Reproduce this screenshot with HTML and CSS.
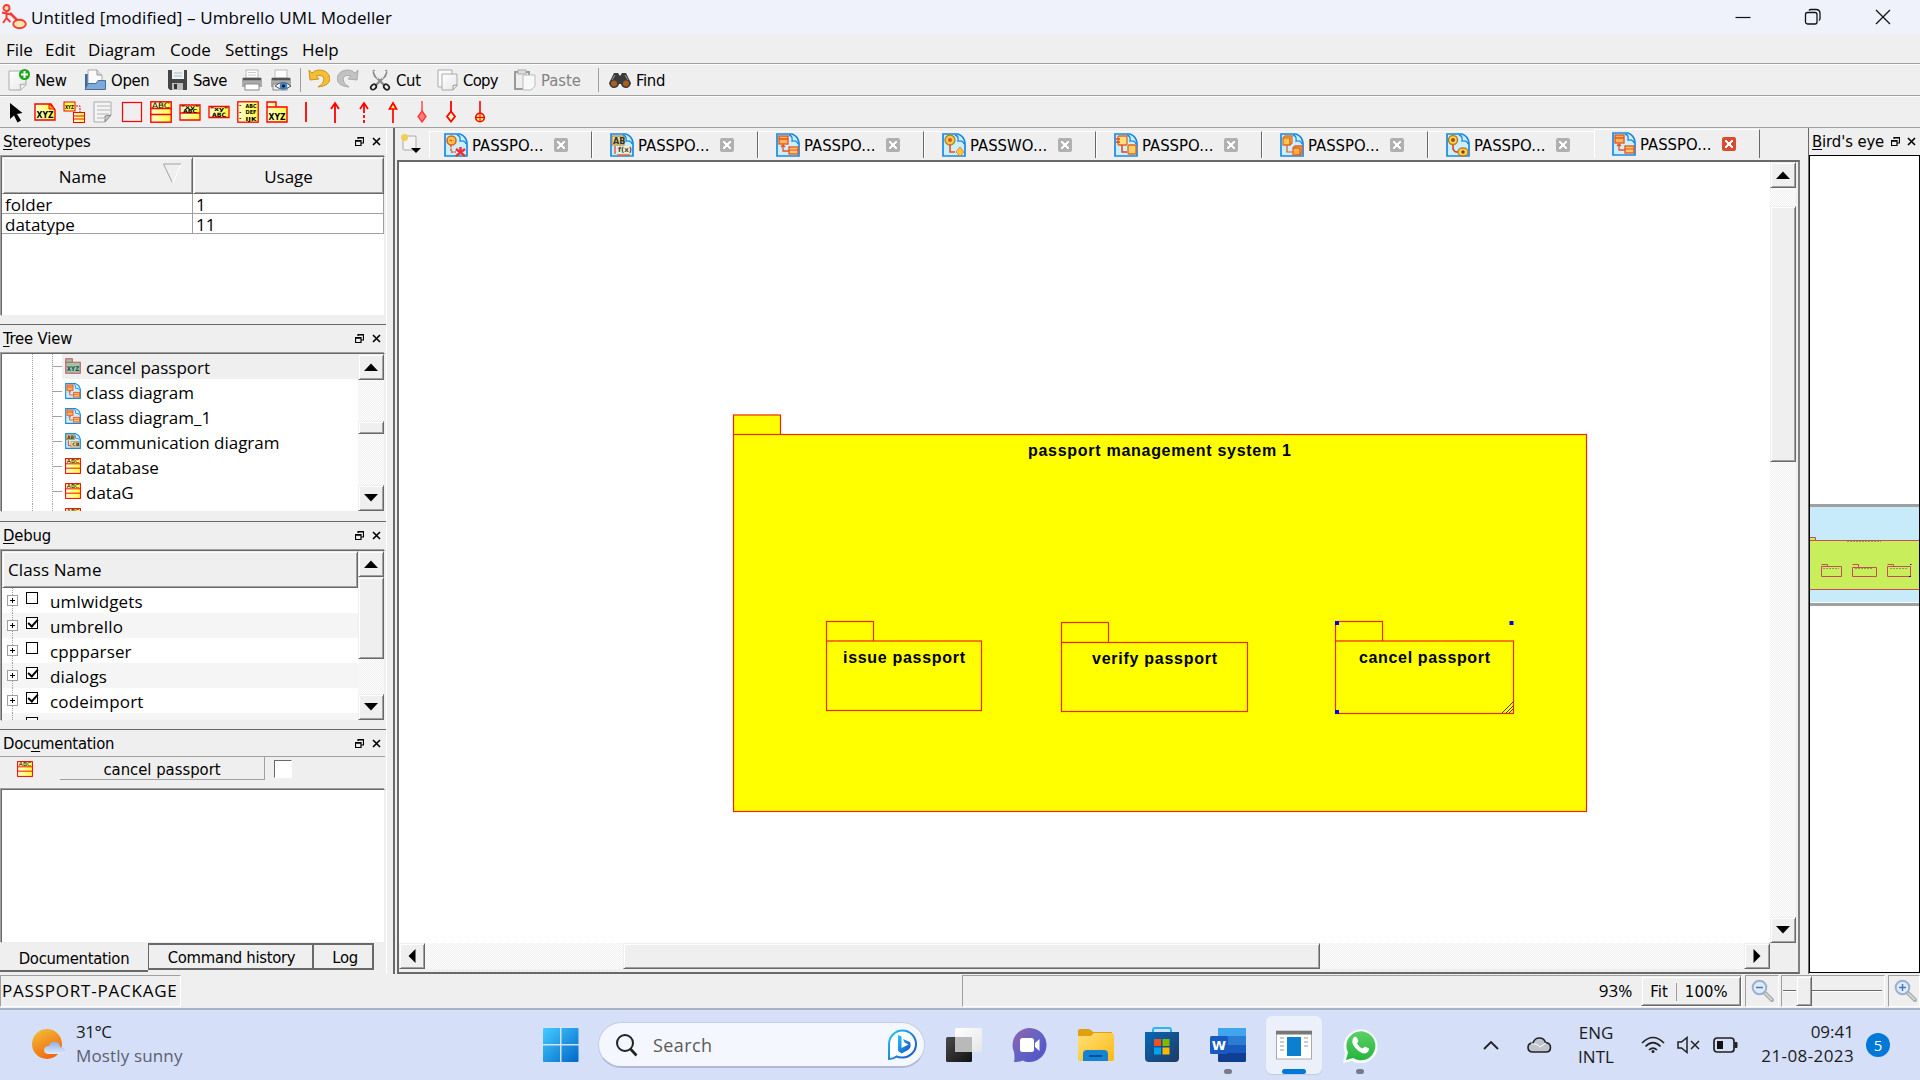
FILE: index.html
```html
<!DOCTYPE html>
<html lang="en">
<head>
<meta charset="utf-8">
<title>Umbrello UML Modeller</title>
<link rel="stylesheet" href="styles.css">
</head>
<body>
<svg class="defs" width="0" height="0" aria-hidden="true">
  <defs>
    <linearGradient id="gy" x1="0" y1="0" x2="1" y2="0"><stop offset="0" stop-color="#ffffd0"/><stop offset="1" stop-color="#ffff3c"/></linearGradient>
    <linearGradient id="gsun" x1="0" y1="0" x2=".5" y2="1"><stop offset="0" stop-color="#f3c23a"/><stop offset="1" stop-color="#ef6a10"/></linearGradient>
    <linearGradient id="gcloud" x1="0" y1="0" x2="0" y2="1"><stop offset="0" stop-color="#8fb0ea"/><stop offset="1" stop-color="#dfeafc"/></linearGradient>
    <linearGradient id="gwin" x1="0" y1="0" x2="1" y2="1"><stop offset="0" stop-color="#45ccff"/><stop offset="1" stop-color="#0067c9"/></linearGradient>
    <linearGradient id="gbing" x1="0" y1="0" x2="1" y2="1"><stop offset="0" stop-color="#21c8f6"/><stop offset="1" stop-color="#1b49c4"/></linearGradient>
    <linearGradient id="gchat" x1="0" y1="0" x2="1" y2="1"><stop offset="0" stop-color="#9563a8"/><stop offset=".5" stop-color="#6264c4"/><stop offset="1" stop-color="#4d50c8"/></linearGradient>
    <linearGradient id="gfold" x1="0" y1="0" x2="1" y2="1"><stop offset="0" stop-color="#ffe07a"/><stop offset="1" stop-color="#fdb913"/></linearGradient>
    <linearGradient id="gstore" x1="0" y1="0" x2="1" y2="1"><stop offset="0" stop-color="#0568b8"/><stop offset="1" stop-color="#203a63"/></linearGradient>
    <linearGradient id="gwa" x1="0" y1="0" x2="0" y2="1"><stop offset="0" stop-color="#5bd066"/><stop offset="1" stop-color="#27b43e"/></linearGradient>
    <linearGradient id="gdark" x1="0" y1="0" x2="1" y2="1"><stop offset="0" stop-color="#4a4a4a"/><stop offset="1" stop-color="#111"/></linearGradient>
    <linearGradient id="gpage" x1="0" y1="0" x2="1" y2="1"><stop offset="0" stop-color="#fff"/><stop offset="1" stop-color="#e6e6e6"/></linearGradient>

    <symbol id="float" viewBox="0 0 9 9"><path d="M3 .5h5.500v5.500h-2M3 0v2M8.500 1h-5.500M.5 3.500h5.500v5h-5.500zM.5 4.200h5.500" fill="none" stroke="#000" stroke-width="1.200"/></symbol>
    <symbol id="close" viewBox="0 0 9 9"><path d="M1 1l7 7M8 1l-7 7" stroke="#000" stroke-width="1.600"/></symbol>
    <symbol id="up" viewBox="0 0 14 8"><path d="M0 8L7 0.500 14 8z"/></symbol>
    <symbol id="down" viewBox="0 0 14 8"><path d="M0 0L7 7.500 14 0z"/></symbol>

    <symbol id="page" viewBox="0 0 24 24"><path d="M1 1h15q6 2 7 9v13h-22z" fill="#ccefff" stroke="#1a8ae0" stroke-width="1.700"/><path d="M13 2q4 1 3 6 5-1 6 3" fill="#fff" stroke="#1a8ae0" stroke-width="1.300"/></symbol>
    <symbol id="d-use" viewBox="0 0 24 24"><use href="#page"/><circle cx="7.500" cy="7.500" r="4.500" fill="#f6c94a" stroke="#d9641e" stroke-width="1.600"/><path d="M5.500 7.500h4M7 12v7h5" fill="none" stroke="#f04c30" stroke-width="1.500" stroke-dasharray="2.500 1"/><path d="M12 16l9 7M21 16l-9 7M16.500 14v5" stroke="#f03030" stroke-width="2.400"/></symbol>
    <symbol id="d-seq" viewBox="0 0 24 24"><use href="#page"/><rect x="2" y="3" width="12" height="9" fill="#f0dc8c" stroke="#a88232"/><text x="3" y="11" font-size="8" font-weight="700" fill="#333">AB</text><path d="M5 13v8M7 22h13" stroke="#f06030" stroke-width="1.500"/><rect x="8" y="13" width="13" height="7" fill="#f3ecc8"/><text x="8" y="19" font-size="7" font-weight="700" fill="#444">f(x)</text></symbol>
    <symbol id="d-class" viewBox="0 0 24 24"><use href="#page"/><rect x="3" y="3" width="9" height="8" fill="#ffb55c" stroke="#e8501c" stroke-width="1.300"/><path d="M3 6h9M7 12v6h6M5 14l2-2 2 2" fill="none" stroke="#e8501c" stroke-width="1.300"/><rect x="13" y="14" width="9" height="7" fill="#ffc66c" stroke="#e8501c" stroke-width="1.300"/><path d="M13 17h9" stroke="#e8501c"/></symbol>
    <symbol id="d-act" viewBox="0 0 24 24"><use href="#page"/><circle cx="8" cy="7" r="5" fill="#f6c94a" stroke="#a88232" stroke-width="1.300"/><circle cx="8" cy="7" r="2" fill="#d9541e"/><path d="M8 12v7h5" fill="none" stroke="#f04c20" stroke-width="1.600"/><path d="M18 14l4 5-4 4-4-4z" fill="#ffc83c" stroke="#f08020"/></symbol>
    <symbol id="d-comp" viewBox="0 0 24 24"><use href="#page"/><rect x="4" y="3" width="9" height="9" rx="1" fill="#ffe07c" stroke="#e8601c" stroke-width="1.300"/><path d="M2 6h4M2 9h4M8 12v7h5" fill="none" stroke="#e8401c" stroke-width="1.500"/><rect x="14" y="12" width="8" height="9" rx="1" fill="#ffd25c" stroke="#e8601c" stroke-width="1.300"/></symbol>
    <symbol id="d-dep" viewBox="0 0 24 24"><use href="#page"/><path d="M3 5l2-2h7v7l-2 2h-7z" fill="#ffc64c" stroke="#d9701e" stroke-width="1.300"/><path d="M3 5h7v7M7 12v7h6" fill="none" stroke="#e0502c" stroke-width="1.200"/><path d="M13 15l2-2h7v7l-2 2h-7z" fill="#ffb03c" stroke="#e0602c" stroke-width="1.300"/><path d="M13 15h7v7" fill="none" stroke="#c0502c"/></symbol>
    <symbol id="d-state" viewBox="0 0 24 24"><use href="#page"/><circle cx="7" cy="7" r="4.500" fill="#f6d94a" stroke="#c07a22" stroke-width="1.500"/><circle cx="7" cy="7" r="2" fill="#a05020"/><path d="M7 12q-1 8 6 7" fill="none" stroke="#e0401c" stroke-width="1.600"/><ellipse cx="17" cy="19" rx="5" ry="4" fill="#f6d94a" stroke="#c07a22" stroke-width="1.400"/><circle cx="17" cy="19" r="1.800" fill="#a03020"/></symbol>
    <symbol id="d-comm" viewBox="0 0 24 24"><use href="#page"/><rect x="2" y="3" width="12" height="7" fill="#f0e08c" stroke="#a88232"/><text x="3" y="9" font-size="7" font-weight="700" fill="#333">AB</text><path d="M5 11v8h4" fill="none" stroke="#e0401c" stroke-width="1.500"/><rect x="9" y="13" width="12" height="8" fill="#f8e89c" stroke="#c88232"/><text x="11" y="20" font-size="7" font-weight="700" fill="#333">CB</text></symbol>
    <symbol id="cls" viewBox="0 0 22 22"><rect x=".8" y=".8" width="20.400" height="20.400" fill="url(#gy)" stroke="red" stroke-width="1.400"/><path d="M1 8h20M1 14h20" stroke="red" stroke-width="1.300"/><text x="11" y="7.300" font-size="7.500" text-anchor="middle" textLength="17" lengthAdjust="spacingAndGlyphs">ABC</text></symbol>
    <symbol id="pkg" viewBox="0 0 22 22"><path d="M1 21V1h9v5h11v15zM1 6h9" fill="url(#gy)" stroke="red" stroke-width="1.400"/><text x="11" y="18.500" font-size="9" font-weight="700" text-anchor="middle" textLength="17" lengthAdjust="spacingAndGlyphs">XYZ</text></symbol>
    <symbol id="pkg-sel" viewBox="0 0 22 22"><path d="M1 21V1h9v5h11v15zM1 6h9" fill="#9fc79a" stroke="#c0506a" stroke-width="1.400"/><text x="11" y="18.500" font-size="9" font-weight="700" fill="#1c4a6c" text-anchor="middle" textLength="17" lengthAdjust="spacingAndGlyphs">XYZ</text></symbol>
    <symbol id="mag" viewBox="0 0 24 24"><path d="M13 13l8 8" stroke="#aaa" stroke-width="4" stroke-linecap="round"/><path d="M14 14l7 7" stroke="#ddd" stroke-width="1.500"/><circle cx="8.500" cy="8.500" r="6.800" fill="#dcebfa" stroke="#9ab0cc" stroke-width="2"/></symbol>
  </defs>
</svg>

<header class="titlebar">
  <svg class="app-logo" width="26" height="26" viewBox="0 0 26 26"><g fill="#ffe9b0" stroke="#fb3a30" stroke-width="1.900"><path d="M9 9l9 9" stroke-width="2.500"/><circle cx="5.500" cy="4" r="3"/><path d="M1 8.500l9 2M5.500 7v7l-3.500 5M5.500 14l4 4" fill="none"/><ellipse cx="18.500" cy="20" rx="6.300" ry="4.300"/></g></svg>
  <span class="title-text">Untitled [modified] – Umbrello UML Modeller</span>
  <div class="caption-buttons">
    <svg width="18" height="18"><path d="M1.500 9.500h15" stroke="#111" stroke-width="1.200"/></svg>
    <svg width="18" height="18" fill="none" stroke="#111" stroke-width="1.300"><rect x="1.500" y="4.500" width="11.500" height="11.500" rx="2"/><path d="M5 2.500q.5-1 2-1h5q4 0 4 4v5q0 1.500-1.200 2"/></svg>
    <svg width="18" height="18"><path d="M2 2l14 14M16 2L2 16" stroke="#111" stroke-width="1.300"/></svg>
  </div>
</header>

<nav class="menubar"><span>File</span><span>Edit</span><span>Diagram</span><span>Code</span><span>Settings</span><span>Help</span></nav>

<div class="toolbar main-tools">
  <span class="tool"><svg width="22" height="22"><path d="M1 2h17v14l-5 5H1z" fill="url(#gpage)" stroke="#aaa"/><path d="M18 15l-6 .5 1 5.500" fill="#eee" stroke="#aaa"/><circle cx="16.500" cy="5.500" r="5.500" fill="#18a818"/><path d="M16.500 2v7M13 5.500h7" stroke="#fff" stroke-width="2"/></svg><b>New</b></span>
  <span class="tool"><svg width="22" height="22"><path d="M1 5h5V20H1z" fill="#3d6a9e"/><path d="M4 1h9l5 5v9H4z" fill="#fafafa" stroke="#aaa"/><path d="M13 1v5h5" fill="#ddd" stroke="#999"/><path d="M1 20.500l3-6h8l2-3h7.500v9z" fill="#7fa9d8" stroke="#44719f"/></svg><b>Open</b></span>
  <span class="tool save"><svg width="22" height="22"><path d="M1 1h19v20H3l-2-2z" fill="#454545"/><rect x="5" y="1" width="12" height="9" fill="#eef3f8"/><path d="M7 4h8M7 7h8" stroke="#a9b6c6"/><rect x="5" y="14" width="11" height="7" fill="#bbb"/><rect x="7" y="15" width="3" height="5" fill="#333"/></svg><b>Save</b></span>
  <span class="tool"><svg width="22" height="22"><rect x="5" y="1" width="12" height="8" fill="#fff" stroke="#bbb"/><path d="M7 3.500h8M7 6h8" stroke="#ccc"/><path d="M1 9h20v9H1z" fill="#aaa"/><path d="M2 10h18" stroke="#555" stroke-width="2.500"/><rect x="4" y="15" width="14" height="6" fill="#fff" stroke="#888"/></svg></span>
  <span class="tool"><svg width="22" height="22"><rect x="5" y="1" width="12" height="8" fill="#fff" stroke="#bbb"/><path d="M1 9h20v9H1z" fill="#aaa"/><path d="M2 10h18" stroke="#555" stroke-width="2.500"/><rect x="3" y="15" width="14" height="6" fill="#eee" stroke="#888"/><path d="M5 17q8-7 16 0-8 6-16 0z" fill="#fff" stroke="#456"/><circle cx="13.500" cy="17" r="3.800" fill="#3f7fc4"/><circle cx="13.500" cy="17" r="1.500" fill="#112"/></svg></span>
  <i class="tool-sep"></i>
  <span class="tool"><svg width="22" height="22"><path d="M1 1l1 10 9-1-3-3q7-2 8 3 0 5-6 8 12-1 12-9Q20 1 11 1 7 1 4 4z" fill="#f3bd36" stroke="#cf9417"/></svg></span>
  <span class="tool"><svg width="22" height="22"><path d="M21 1l-1 10-9-1 3-3q-7-2-8 3 0 5 6 8Q0 17 0 9 2 1 11 1q4 0 7 3z" fill="#c2c2c2" stroke="#aaa"/></svg></span>
  <span class="tool"><svg width="22" height="22"><path d="M5 1q-1 3 1 6l9 9M17 1q1 3-1 6l-9 9" fill="none" stroke="#8b8b8b" stroke-width="2.300"/><path d="M5 2l4 8M17 2l-4 8" stroke="#f8f8f8"/><ellipse cx="4.500" cy="18" rx="3" ry="2.300" transform="rotate(-45 4.500 18)" fill="none" stroke="#222" stroke-width="1.800"/><ellipse cx="17.500" cy="18" rx="3" ry="2.300" transform="rotate(45 17.500 18)" fill="none" stroke="#222" stroke-width="1.800"/></svg><b>Cut</b></span>
  <span class="tool save"><svg width="22" height="22"><path d="M1 1h14v17H1z" fill="#fafafa" stroke="#aaa"/><path d="M5 5h15v12l-4 4H5z" fill="url(#gpage)" stroke="#aaa"/><path d="M20 16l-4 .5v4.500" fill="none" stroke="#999"/></svg><b>Copy</b></span>
  <span class="tool off"><svg width="22" height="22"><rect x="1" y="3" width="14" height="17" fill="#eee" stroke="#999" stroke-width="2"/><rect x="4" y="1" width="8" height="4" fill="#ddd" stroke="#aaa"/><path d="M9 6h12v11l-4 4H9z" fill="#f8f8f8" stroke="#bbb"/></svg><b>Paste</b></span>
  <i class="tool-sep"></i>
  <span class="tool"><svg width="22" height="22"><path d="M5 4h4l2 3 2-3h4l5 10q-1 5-5 5-4 0-5-4h-2q-1 4-5 4-4 0-5-5z" fill="#3a3a3a"/><circle cx="5" cy="14.500" r="3" fill="#a85e22"/><circle cx="17" cy="14.500" r="3" fill="#a85e22"/><path d="M6 6l-3 5M16 6l3 5" stroke="#999"/></svg><b>Find</b></span>
</div>

<div class="toolbar uml-tools">
  <svg width="22" height="22"><path d="M5 2v16l4-3.500 3.500 7 3.500-2-4-6.500 5.500-1z" fill="#000"/></svg>
  <svg width="22" height="22"><path d="M1 19V3h16l4 6v10z" fill="url(#gy)" stroke="red" stroke-width="1.400"/><path d="M15 3v5h6z" fill="#f6b800" stroke="red"/><text x="11" y="17" font-size="9" font-weight="700" text-anchor="middle" textLength="17" lengthAdjust="spacingAndGlyphs">XYZ</text></svg>
  <svg width="22" height="22"><rect x="1" y="1" width="11" height="9" fill="#ffff50" stroke="red"/><text x="2" y="8" font-size="5.500" font-weight="700" textLength="9" lengthAdjust="spacingAndGlyphs">XYZ</text><path d="M13 5h4v6" stroke="red" fill="none" stroke-dasharray="2 1"/><rect x="10.500" y="11.500" width="11" height="10" fill="url(#gy)" stroke="red"/><path d="M10 15h12M10 18h12" stroke="red"/></svg>
  <svg width="22" height="22"><path d="M2 1h17v13l-6 7H2z" fill="#f4f4f4" stroke="#aaa"/><path d="M5 5h13M5 9h13M5 13h12M5 17h7" stroke="#b4b4b4"/><path d="M19 14l-6 1v6z" fill="#ccc" stroke="#888"/></svg>
  <svg width="22" height="22"><rect x="1.500" y="1.500" width="19" height="19" fill="none" stroke="red" stroke-width="1.200"/></svg>
  <svg width="22" height="22"><rect x=".8" y=".8" width="20.400" height="20.400" fill="url(#gy)" stroke="red" stroke-width="1.400"/><path d="M1 7.500h20M1 13.500h20" stroke="red" stroke-width="1.300"/><text x="11" y="7" font-size="7.500" text-anchor="middle" textLength="18" lengthAdjust="spacingAndGlyphs">ABC</text></svg>
  <svg width="22" height="22"><path d="M1 4h20v15H1zM1 12h20" fill="url(#gy)" stroke="red" stroke-width="1.300"/><text x="11" y="7.500" font-size="5" font-weight="700" text-anchor="middle" textLength="18" lengthAdjust="spacingAndGlyphs">"xy"</text><text x="11" y="11.500" font-size="5.500" font-weight="700" text-anchor="middle" textLength="14" lengthAdjust="spacingAndGlyphs">ABC</text></svg>
  <svg width="22" height="22"><path d="M1 5.500h20v11H1z" fill="url(#gy)" stroke="red" stroke-width="1.300"/><text x="11" y="9.800" font-size="5.500" font-weight="700" text-anchor="middle" textLength="18" lengthAdjust="spacingAndGlyphs">"xy"</text><text x="11" y="15.500" font-size="6" font-weight="700" text-anchor="middle" textLength="14" lengthAdjust="spacingAndGlyphs">ABC</text></svg>
  <svg width="22" height="22"><rect x=".8" y=".8" width="20.400" height="20.400" fill="url(#gy)" stroke="red" stroke-width="1.300"/><g font-size="5.500" font-weight="700"><text x="2" y="6">-</text><text x="8.500" y="6.500" textLength="11" lengthAdjust="spacingAndGlyphs">ABC</text><text x="2" y="13">-</text><text x="8.500" y="13" textLength="11" lengthAdjust="spacingAndGlyphs">DEF</text><text x="2" y="19">-</text><text x="8.500" y="19.500" textLength="11" lengthAdjust="spacingAndGlyphs">IJK</text></g></svg>
  <svg width="22" height="22"><use href="#pkg"/></svg>
  <svg width="22" height="22"><path d="M11 1v20" stroke="red" stroke-width="1.800"/></svg>
  <svg width="22" height="22" fill="none" stroke="red" stroke-width="1.800"><path d="M11 22V2M7 8l4-6 4 6"/></svg>
  <svg width="22" height="22" fill="none" stroke="red" stroke-width="1.800"><path d="M11 22V9" stroke-dasharray="3 2"/><path d="M11 9V2M7 8l4-6 4 6"/></svg>
  <svg width="22" height="22" stroke="red" stroke-width="1.700"><path d="M11 22V8"/><path d="M7.500 8L11 2l3.500 6z" fill="#ffff50"/></svg>
  <svg width="22" height="22" stroke="#f33" stroke-width="1.300"><path d="M11 0v11"/><path d="M11 10l4 5.500-4 5.500-4-5.500z" fill="#ff7d7d"/></svg>
  <svg width="22" height="22" stroke="red" stroke-width="1.800"><path d="M11 0v11"/><path d="M11 10.500l4 5-4 5-4-5z" fill="#ffffc0"/></svg>
  <svg width="22" height="22" stroke="red" stroke-width="1.600"><path d="M11 0v12"/><circle cx="11" cy="16.500" r="4.300" fill="#ffe860"/><path d="M11 12v9M7 16.500h8" stroke-width="1"/></svg>
</div>

<main class="workspace">
  <aside class="left-dock">
    <section class="dock stereo">
      <h2 class="dock-title"><span><u>S</u>tereotypes</span><svg><use href="#float"/></svg><svg><use href="#close"/></svg></h2>
      <div class="sunken">
        <div class="grid-head"><span class="raised name-head">Name<svg width="20" height="22"><path d="M.5 1h18M.5 1l9 19" stroke="#a0a0a0" fill="none"/><path d="M18.500 1l-9 19" stroke="#fff"/></svg></span><span class="raised">Usage</span></div>
        <div class="grid-row"><span>folder</span><span>1</span></div>
        <div class="grid-row"><span>datatype</span><span>11</span></div>
      </div>
    </section>
    <section class="dock tree">
      <h2 class="dock-title"><span><u>T</u>ree View</span><svg><use href="#float"/></svg><svg><use href="#close"/></svg></h2>
      <div class="sunken scroll-box">
        <ul class="tree-list">
          <li><div class="hl"><svg><use href="#pkg-sel"/></svg>cancel passport</div></li>
          <li><div><svg><use href="#d-class"/></svg>class diagram</div></li>
          <li><div><svg><use href="#d-class"/></svg>class diagram_1</div></li>
          <li><div><svg><use href="#d-comm"/></svg>communication diagram</div></li>
          <li><div><svg><use href="#cls"/></svg>database</div></li>
          <li><div><svg><use href="#cls"/></svg>dataG</div></li>
          <li><div><svg><use href="#cls"/></svg></div></li>
        </ul>
        <div class="vscroll"><i class="raised btn"><svg><use href="#up"/></svg></i><i class="gap-t"></i><i class="raised thumb-t"></i><i class="fill"></i><i class="raised btn"><svg><use href="#down"/></svg></i></div>
      </div>
    </section>
    <section class="dock debug">
      <h2 class="dock-title"><span><u>D</u>ebug</span><svg><use href="#float"/></svg><svg><use href="#close"/></svg></h2>
      <div class="sunken scroll-box">
        <div class="debug-list">
          <div class="raised class-head">Class Name</div>
          <div class="check-row"><i class="plus"></i><i class="box"></i>umlwidgets</div>
          <div class="check-row"><i class="plus"></i><i class="box on"></i>umbrello</div>
          <div class="check-row"><i class="plus"></i><i class="box"></i>cppparser</div>
          <div class="check-row"><i class="plus"></i><i class="box on"></i>dialogs</div>
          <div class="check-row"><i class="plus"></i><i class="box on"></i>codeimport</div>
          <div class="check-row"><i class="plus"></i><i class="box"></i></div>
        </div>
        <div class="vscroll"><i class="raised btn"><svg><use href="#up"/></svg></i><i class="raised thumb-d"></i><i class="fill"></i><i class="raised btn"><svg><use href="#down"/></svg></i></div>
      </div>
    </section>
    <section class="dock docs">
      <h2 class="dock-title"><span>Doc<u>u</u>mentation</span><svg><use href="#float"/></svg><svg><use href="#close"/></svg></h2>
      <div class="doc-bar"><svg width="16" height="16"><use href="#cls"/></svg><span class="doc-name">cancel passport</span><i class="doc-check"></i></div>
      <div class="sunken doc-text"></div>
      <div class="dock-tabs"><span class="cur">Documentation</span><span class="hist">Command history</span><span class="log">Log</span></div>
    </section>
  </aside>

  <section class="center">
    <div class="tabs">
      <span class="new-tab"><svg width="22" height="22"><rect x="3" y="3" width="13" height="14" rx="1" fill="#f4f4f4" stroke="#aaa"/><circle cx="4.500" cy="4.500" r="3.500" fill="#f0cf58"/><path d="M11 15h10l-5 5z"/></svg></span>
      <span class="tab first"><svg><use href="#d-use"/></svg><b>PASSPO...</b><i class="x"></i></span>
      <span class="tab"><svg><use href="#d-seq"/></svg><b>PASSPO...</b><i class="x"></i></span>
      <span class="tab"><svg><use href="#d-class"/></svg><b>PASSPO...</b><i class="x"></i></span>
      <span class="tab big"><svg><use href="#d-act"/></svg><b>PASSWO...</b><i class="x"></i></span>
      <span class="tab"><svg><use href="#d-comp"/></svg><b>PASSPO...</b><i class="x"></i></span>
      <span class="tab"><svg><use href="#d-dep"/></svg><b>PASSPO...</b><i class="x"></i></span>
      <span class="tab last"><svg><use href="#d-state"/></svg><b>PASSPO...</b><i class="x"></i></span>
      <span class="tab active"><svg><use href="#d-class"/></svg><b>PASSPO...</b><i class="x"></i></span>
    </div>
    <div class="canvas-frame">
      <svg class="canvas" width="1371" height="781" viewBox="399 162 1371 781">
        <g fill="#ff0" stroke="#f02800" stroke-width="1.200">
          <rect x="733.500" y="415" width="47" height="20"/><rect x="733.500" y="434.500" width="853" height="377"/>
          <rect x="826.500" y="621.500" width="47" height="20"/><rect x="826.500" y="641" width="155" height="69.500"/>
          <rect x="1061.500" y="622.500" width="47" height="20"/><rect x="1061.500" y="642.500" width="186" height="69"/>
          <rect x="1335.500" y="621.500" width="47" height="20"/><rect x="1335.500" y="641" width="178" height="72.500"/>
        </g>
        <g class="node-label"><text x="1028" y="456" textLength="263">passport management system 1</text><text x="843" y="663" textLength="122">issue passport</text><text x="1092" y="664" textLength="125">verify passport</text><text x="1359" y="663" textLength="131">cancel passport</text></g>
        <path d="M1502 713l11.500-11.500M1506 713l7.500-7.500M1509 713l4.500-4.500" stroke="#553c00"/>
        <path d="M1335 621h4v4h-4zM1509.500 621h4v4h-4zM1335 710h4v4h-4z" fill="#00f"/>
      </svg>
      <div class="vscroll"><i class="raised btn"><svg><use href="#up"/></svg></i><i class="gap-m"></i><i class="raised thumb-m"></i><i class="fill"></i><i class="raised btn"><svg><use href="#down"/></svg></i></div>
      <div class="hscroll"><i class="raised hbtn"><svg width="8" height="14"><path d="M7.500 0L.5 7l7 7z"/></svg></i><i class="gap-h"></i><i class="raised thumb-h"></i><i class="fill"></i><i class="raised hbtn"><svg width="8" height="14"><path d="M.5 0l7 7-7 7z"/></svg></i></div>
    </div>
  </section>

  <aside class="right-dock">
    <h2 class="dock-title"><span><u>B</u>ird's eye</span><svg><use href="#float"/></svg><svg><use href="#close"/></svg></h2>
    <div class="overview">
      <svg width="111" height="103" viewBox="0 0 111 103"><rect width="111" height="103" fill="#fff"/><rect y="1" width="111" height="3" fill="#a0a0a0"/><rect y="4" width="111" height="95" fill="#c8ebfa"/><rect y="100" width="111" height="3" fill="#a0a0a0"/><rect x="-2" y="37.500" width="115" height="49" fill="#c9ee5c" stroke="#c84a5c"/><path d="M0 34.500h6.500v3H0z" fill="#c9ee5c" stroke="#c84a5c"/><g fill="none" stroke="#c84a5c"><path d="M12.500 63.500h20v10h-20zM12.500 61.500h6v2M43.500 64.500h24v9h-24zM43.500 61.500h6v3M78.500 63.500h23v10h-23zM78.500 61.500h6v2"/><path d="M38 38.500h34M14 65.500h16M46 65.500h17M81 65.500h17" stroke="#86a24c" stroke-dasharray="2 1"/></g><path d="M101 61h1.500v1H101zM100 73h2v1h-2z" fill="#00f"/><path d="M.5 4v95M110.500 4v95" stroke="#285060"/></svg>
    </div>
  </aside>
</main>

<footer class="statusbar">
  <span class="st-name">PASSPORT-PACKAGE</span>
  <span class="st-zoom">93%<span class="raised st-buttons"><b>Fit</b><i></i><b>100%</b></span></span>
  <span class="st-cell zo"><svg width="24" height="24"><use href="#mag"/><path d="M5 8.500h7" stroke="#4878b8" stroke-width="1.500"/></svg></span>
  <span class="st-cell slider"><i class="rail a"></i><i class="raised knob"></i><i class="rail b"></i></span>
  <span class="st-cell zi"><svg width="24" height="24"><use href="#mag"/><path d="M5 8.500h7M8.500 5v7" stroke="#4878b8" stroke-width="1.500"/></svg></span>
</footer>

<div class="taskbar">
  <div class="weather">
    <svg width="34" height="32"><circle cx="15" cy="15" r="15" fill="url(#gsun)"/><path d="M17 25q-5 0-5-4t5-4q2-5 7-4 4 1 4 5 5 0 5 3.500t-4 3.500z" fill="url(#gcloud)"/></svg>
    <div class="wtext"><span class="deg">31°C</span><span class="muted">Mostly sunny</span></div>
  </div>
  <div class="apps">
    <svg class="start" width="36" height="36"><path d="M0 2q0-1 1-1h16v16H0zM18.500 1h16q1 0 1 1v15h-17zM0 18.500h17V35H1q-1 0-1-1zM18.500 18.500h17V34q0 1-1 1h-16z" fill="url(#gwin)"/></svg>
    <div class="search">
      <svg width="24" height="24" fill="none" stroke="#222"><circle cx="11" cy="10" r="8" stroke-width="2"/><path d="M16.500 16l6 6.500" stroke-width="2.600"/></svg><span>Search</span>
      <svg class="bing" width="31" height="32"><path d="M2 30q0-3 0-15A13.500 13.500 0 1 1 15.500 28.500q-4 0-6-1-3 2.500-7.500 2.500z" fill="#fff" stroke="url(#gbing)" stroke-width="2"/><path d="M11 6l3.500 1.500V19l7-3.500-4-2-1.500-3.500 7 3q2 5-2 8l-6.500 3.500-3.500-2.500z" fill="url(#gbing)"/></svg>
    </div>
    <span class="app"><svg width="36" height="36"><rect x="9" y="1" width="27" height="24" rx="1.500" fill="url(#gpage)"/><rect x="0" y="10" width="26" height="25" rx="1.500" fill="url(#gdark)"/><rect x="9" y="10" width="17" height="15" fill="#b9b9b9"/></svg></span>
    <span class="app"><svg width="36" height="36"><path d="M2 35q1-3 0-10A17 17 0 1 1 18 35q-5 0-7-1.500Q8 35 2 35z" fill="url(#gchat)"/><rect x="8" y="11" width="14" height="14" rx="2.500" fill="#fff"/><path d="M23 16l4.500-4v12L23 20z" fill="#fff"/></svg></span>
    <span class="app"><svg width="36" height="36"><path d="M0 4q0-2 2-2h8q2 0 3 1l2 2h19v9H0z" fill="#e0a010"/><path d="M0 9h13l3-3h18q2 0 2 2v24q0 2-2 2H2q-2 0-2-2z" fill="url(#gfold)"/><path d="M5 34v-7q0-4 4-4h17q4 0 4 4v7z" fill="#1683d2"/><path d="M11 29h13" stroke="#0a5298" stroke-width="2"/></svg></span>
    <span class="app"><svg width="36" height="36"><path d="M9 8V3q0-2 2-2h14q2 0 2 2v5" fill="none" stroke="#28b8f0" stroke-width="2"/><path d="M1 5h34v26q0 4-4 4H5q-4 0-4-4z" fill="url(#gstore)"/><rect x="10" y="12" width="7" height="7" fill="#f25022"/><rect x="18.500" y="12" width="7" height="7" fill="#7fba00"/><rect x="10" y="20.500" width="7" height="7" fill="#00a4ef"/><rect x="18.500" y="20.500" width="7" height="7" fill="#ffb900"/></svg></span>
    <span class="app"><svg width="36" height="36"><rect x="8" y="1" width="28" height="34" rx="1.500" fill="#103f91"/><rect x="8" y="1" width="28" height="9" rx="1.500" fill="#41a5ee"/><rect x="8" y="9" width="28" height="9" fill="#2b7cd3"/><rect x="8" y="18" width="28" height="8" fill="#185abd"/><rect x="0" y="9" width="18" height="18" rx="1.500" fill="#185abd"/><text x="9" y="23" text-anchor="middle" font-size="13" font-weight="700" fill="#fff">W</text></svg><i class="dot"></i></span>
    <span class="app current"><svg width="36" height="36"><rect x=".5" y="4" width="35" height="28" fill="#fdfdfd" stroke="#aaa"/><rect x="0" y="4" width="36" height="3.500" fill="#777"/><rect x="11" y="10" width="14" height="19" fill="#0c80d0"/><path d="M4 11h4M4 15h4M4 19h4M4 23h4M28 11h4M28 15h4M28 19h4" stroke="#ccc" stroke-width="2"/></svg><i class="bar"></i></span>
    <span class="app"><svg width="36" height="36"><path d="M1 36l2-10A17 17 0 1 1 10 34z" fill="#f6faf8"/><path d="M4 33l2-7.500A14.500 14.500 0 1 1 11 31z" fill="url(#gwa)"/><path d="M12 10q2-1 3 1l1.500 3-1.500 2.500q2 3.500 5.500 5l2.500-2 4 2q0 4-4 5-5 0-10-6-5-6-1-10.500z" fill="#fff"/></svg><i class="dot"></i></span>
  </div>
  <div class="tray">
    <svg class="chev" width="18" height="12"><path d="M2 10l7-7 7 7" fill="none" stroke="#222" stroke-width="1.800"/></svg>
    <svg class="cloud" width="26" height="18"><path d="M7 16q-5 0-5-4.500T7 7q1.500-5 6.500-5 4.500 0 6 4.500 5 .5 5 5T20 16z" fill="#bfc4ce" stroke="#222" stroke-width="1.600"/><path d="M5 8q6-1 9 3l6-4" fill="none" stroke="#fff"/></svg>
    <div class="lang"><span>ENG</span><span>INTL</span></div>
    <svg class="wifi" width="24" height="18" fill="none" stroke="#222" stroke-width="1.700"><path d="M1 7q11-11 22 0M4.500 10.500q7.500-7.500 15 0M8 14q4-4 8 0"/><circle cx="12" cy="15.500" r="1.500" fill="#222" stroke="none"/></svg>
    <svg class="spk" width="24" height="18" fill="none" stroke="#222" stroke-width="1.500"><path d="M1 6h3.500L10 1.500v15L4.500 12H1zM14 5l8 8M22 5l-8 8"/></svg>
    <svg class="bat" width="25" height="16"><rect x="1" y="1" width="20" height="14" rx="3" fill="none" stroke="#222" stroke-width="1.700"/><rect x="4" y="4" width="6" height="8" fill="#111"/><rect x="21.500" y="5" width="3" height="6" rx="1" fill="#222"/></svg>
    <div class="clock"><span>09:41</span><span class="date">21-08-2023</span></div>
    <span class="badge">5</span>
  </div>
</div>
</body>
</html>
```
FILE: styles.css
```css
* { box-sizing: border-box; }
body {
  margin: 0; width: 1920px; height: 1080px; overflow: hidden;
  display: flex; flex-direction: column;
  background: #efefef; color: #000;
  font: 17px/24px "Open Sans", "Noto Sans", sans-serif;
  white-space: nowrap;
}
svg { flex: none; display: block; }
svg text { font-family: "DejaVu Sans", sans-serif; }
b { font-weight: 400; }
.defs { position: absolute; }
u { text-underline-offset: 2px; text-decoration-thickness: 1px; }

/* classic bevels */
.raised {
  background: #efefef;
  border: 1px solid; border-color: #efefef #696969 #696969 #efefef;
  box-shadow: inset 1px 1px #fff, inset -1px -1px #a0a0a0;
}
.sunken {
  background: #fff;
  margin-left: 1px;
  border: 1px solid #efefef; border-top-color: #696969; border-left-color: #696969;
  box-shadow: -1px -1px #a0a0a0;
  overflow: hidden;
}

.titlebar { height: 34px; background: #eff2fb; display: flex; align-items: center; padding-left: 1px; }
.title-text { margin: 2px 0 0 4px; width: 370px; letter-spacing: .1px; }
.caption-buttons { margin-left: auto; display: flex; gap: 52px; padding-right: 28px; }
.menubar { height: 30px; padding: 2px 0 0 6px; border-bottom: 1px solid #a0a0a0; display: grid; grid-template-columns: 39px 43px 82px 55px 77px 60px; align-items: center; }

.toolbar { height: 32px; border-top: 1px solid #fff; border-bottom: 1px solid #a0a0a0; display: flex; align-items: center; }
.main-tools { display: grid; justify-content: start; padding-left: 8px; grid-template-columns: 76px 83px 74px 29px 30px 8px 29px 32px 68px 77px 84px 11px 80px; font: 16.5px/24px "DejaVu Sans Condensed", "Open Sans", sans-serif; letter-spacing: -.3px; }
.tool { display: flex; gap: 5px; align-items: center; }
.tool b { padding-top: 1px; }
.save { letter-spacing: -.7px; gap: 4px; }
.off { color: #838383; letter-spacing: 0; }
.tool-sep { width: 1px; height: 24px; background: #a0a0a0; }
.uml-tools { gap: 7px; padding-left: 5px; }

.workspace { height: 846px; display: flex; }
.left-dock { width: 387px; border-right: 1px solid #fff; display: flex; flex-direction: column; }
.dock { display: flex; flex-direction: column; padding-right: 1px; }
.dock-title { margin: 0; display: flex; align-items: center; gap: 8px; padding: 0 4px 0 3px; font: 16.5px/24px "DejaVu Sans Condensed", "Open Sans", sans-serif; letter-spacing: -.15px; }
.dock-title span { flex: 1; }
.dock-title svg { width: 9px; height: 9px; margin-top: -2px; }
.stereo { height: 196px; }
.stereo .dock-title { height: 28px; }
.stereo .sunken { height: 160px; }
.tree, .debug, .docs { border-top: 1px solid #696969; }
.tree { height: 197px; }
.debug { height: 208px; }
.docs { height: 245px; }
.tree .dock-title, .debug .dock-title { height: 28px; }
.docs .dock-title { height: 26px; padding-top: 2px; letter-spacing: -.25px; }
.tree .sunken { height: 159px; }
.debug .sunken { height: 171px; }

.grid-head, .grid-row { display: grid; grid-template-columns: 191px 191px; width: 382px; }
.grid-head span { height: 37px; text-align: center; padding-top: 7px; }
.grid-head .name-head { position: relative; padding-right: 30px; }
.name-head svg { position: absolute; left: 160px; top: 5px; }
.grid-row { height: 20px; border-bottom: 1px solid #a0a0a0; }
.grid-row span { padding-left: 3px; height: 19px; border-right: 1px solid #a0a0a0; line-height: 21px; }

.scroll-box { display: flex; }
.tree-list { flex: 1; margin: 0; padding: 0 0 0 30px; list-style: none; overflow: hidden; }
.tree-list li { height: 25px; padding-left: 19px; border-left: 1px dotted #a0a0a0; }
.tree-list div { height: 25px; padding: 2px 0 0 12px; display: flex; gap: 5px; align-items: center; background: linear-gradient(#a0a0a0, #a0a0a0) no-repeat 0 12px / 9px 1px; border-left: 1px dotted #a0a0a0; }
.tree-list div.hl { background: linear-gradient(#a0a0a0, #a0a0a0) no-repeat 0 12px / 9px 1px, linear-gradient(to right, #fff 9px, #efefef 9px); }
.tree-list svg { width: 16px; height: 16px; margin-top: -4px; }

.vscroll { width: 26px; display: flex; flex-direction: column; background: repeating-conic-gradient(#efefef 0 25%, #fff 0 50%) 0 0 / 2px 2px; }
.vscroll i, .hscroll i { flex: none; display: flex; align-items: center; justify-content: center; }
.vscroll .fill, .hscroll .fill { flex: 1; }
.btn { height: 26px; }
.btn svg { width: 14px; height: 8px; }
.gap-t { height: 41px; }
.thumb-t { height: 13px; }
.thumb-d { height: 82px; }

.debug-list { flex: 1; overflow: hidden; }
.class-head { height: 37px; padding: 6px 0 0 5px; letter-spacing: .1px; }
.check-row { height: 25px; display: flex; align-items: center; padding: 3px 0 0 6px; letter-spacing: .15px; background: linear-gradient(#a0a0a0 50%, transparent 0) 10px 0 / 1px 2px repeat-y; }
.check-row:nth-child(odd) { background: linear-gradient(#a0a0a0 50%, transparent 0) 10px 0 / 1px 2px repeat-y, #f5f5f5; }
.plus { width: 9px; height: 9px; outline: 1px solid #a0a0a0; margin-top: -4px; background: linear-gradient(#000, #000) center / 5px 1px no-repeat, linear-gradient(#000, #000) center / 1px 5px no-repeat, #fff; }
.box { width: 12px; height: 12px; border: 1px solid #000; background: #fff; margin: -8px 12px 0 9px; }
.on::after { content: ""; display: block; width: 8px; height: 4px; border: solid #000; border-width: 0 0 2px 2px; transform: translate(1px, 1px) rotate(-48deg); }

.doc-bar { height: 24px; border-top: 1px solid #a0a0a0; display: flex; padding-left: 17px; align-items: center; }
.doc-name { width: 205px; height: 23px; margin-left: 27px; text-align: center; border-right: 1px solid #a0a0a0; border-bottom: 1px solid #a0a0a0; font: 16.5px/25px "DejaVu Sans Condensed", sans-serif; }
.doc-check { width: 18px; height: 18px; margin-left: 9px; background: #fff; border: 1px solid #fff; border-top-color: #696969; border-left-color: #696969; }
.doc-text { height: 154px; margin-top: 9px; }
.dock-tabs { height: 30px; display: flex; font: 16.5px/26px "DejaVu Sans Condensed", sans-serif; letter-spacing: -.3px; text-align: center; }
.dock-tabs span { height: 27px; border: 1px solid #696969; border-width: 2px 2px 2px 0; }
.dock-tabs .cur { width: 148px; height: 29px; border-width: 0 0 2px; line-height: 32px; }
.dock-tabs .hist { width: 166px; border-left-width: 1px; line-height: 26px; padding-left: 2px; }
.dock-tabs .log { width: 60px; line-height: 26px; padding-left: 4px; }

.center { width: 1407px; margin-left: 6px; border-left: 2px solid #696969; display: flex; flex-direction: column; }
.tabs { height: 32px; display: flex; align-items: flex-start; padding-top: 3px; }
.new-tab { width: 34px; padding: 2px 0 0 5px; }
.tab { width: 166px; height: 27px; display: flex; align-items: center; padding-left: 17px; border-top: 1px solid #fff; border-left: 1px solid #fff; border-right: 1px solid #696969; }
.tab svg { width: 24px; height: 24px; }
.tab b { width: 86px; padding: 1px 0 0 4px; font: 16.5px/24px "DejaVu Sans Condensed", sans-serif; letter-spacing: .05px; }
.tab.first { width: 163px; padding-left: 14px; }
.tab.big { width: 172px; }
.tab.big b { width: 92px; }
.tab.last { border-right: 0; }
.tab.active { height: 29px; margin-top: -2px; padding-left: 17px; }
.x { width: 14px; height: 14px; border: 2px solid #b0b0b0; border-radius: 2px; background: linear-gradient(45deg, transparent 40%, #fff 40% 60%, transparent 60%) center / 8px 8px no-repeat, linear-gradient(-45deg, transparent 40%, #fff 40% 60%, transparent 60%) center / 8px 8px no-repeat, #b0b0b0; }
.active .x { border-color: #dd4a30; background-color: #dd4a30; }
.canvas-frame { height: 814px; margin-left: 2px; border: 2px solid #696969; border-right-color: #808080; display: grid; grid-template: 781px 29px / 1371px 30px; background: #efefef; }
.canvas { background: #fff; }
.node-label text { font: 700 16px "Liberation Sans", Arial, sans-serif; }
.gap-m { height: 18px; }
.thumb-m { height: 256px; }
.hscroll { height: 26px; display: flex; background: repeating-conic-gradient(#efefef 0 25%, #fff 0 50%) 0 0 / 2px 2px; }
.hbtn { width: 26px; }
.gap-h { width: 198px; }
.thumb-h { width: 697px; }

.right-dock { width: 112px; margin-left: 8px; border-left: 1px solid #696969; }
.right-dock .dock-title { height: 27px; gap: 7px; padding: 1px 4px 0 3px; letter-spacing: -.1px; }
.overview { height: 818px; border: 1px solid #000; background: #fff; padding-top: 347px; overflow: hidden; }
.overview svg { margin-left: -1px; }

.statusbar { height: 34px; display: flex; align-items: flex-start; padding-top: 1px; }
.st-name, .st-zoom, .st-cell { height: 32px; border: 1px solid #a0a0a0; border-right-color: #fff; border-bottom-color: #fff; }
.st-name { width: 181px; padding: 3px 0 0 1px; letter-spacing: .78px; }
.st-zoom { width: 782px; margin-left: 781px; display: flex; align-items: center; justify-content: flex-end; }
.st-buttons { width: 100px; height: 30px; margin-left: 9px; display: flex; align-items: center; gap: 8px; padding: 1px 0 0 8px; font: 16.5px/24px "DejaVu Sans Condensed", sans-serif; letter-spacing: .1px; }
.st-buttons i { width: 1px; height: 18px; background: #a0a0a0; }
.st-cell { display: flex; align-items: center; }
.zo { width: 34px; margin-left: 3px; padding-left: 5px; }
.slider { width: 104px; margin-left: 2px; padding-left: 1px; }
.rail { height: 2px; border-top: 1px solid #696969; background: #fff; }
.rail.a { width: 13px; } .rail.b { width: 70px; }
.knob { width: 16px; height: 30px; }
.zi { width: 32px; margin-left: 3px; padding-left: 5px; }

.taskbar { height: 72px; background: #d5dff7; border-top: 2px solid #aab2c6; display: flex; align-items: center; color: #1b1b1b; }
.weather { width: 543px; padding-left: 32px; display: flex; align-items: center; gap: 10px; }
.wtext { display: flex; flex-direction: column; padding-bottom: 2px; letter-spacing: .15px; }
.deg { letter-spacing: -.5px; }
.muted { color: #5b6070; }
.apps { display: flex; align-items: center; height: 70px; }
.search { width: 327px; height: 46px; margin: 0 6px 0 19px; border-radius: 23px; background: #f4f7fd; border: 1px solid #c3cde3; border-bottom: 2px solid #b0bad2; display: flex; align-items: center; padding-left: 15px; color: #5a5a5a; font-size: 18px; }
.search span { margin-left: 15px; flex: 1; letter-spacing: .4px; }
.bing { margin-right: 6px; }
.app { width: 56px; height: 58px; margin: 0 5px; display: flex; align-items: center; justify-content: center; position: relative; }
.current { background: #ebf0fb; border-radius: 6px; box-shadow: 0 1px 1px #bfc9e0; }
.dot, .bar { position: absolute; bottom: 0; left: 24px; width: 8px; height: 5px; border-radius: 3px; background: #767b87; }
.bar { left: 16px; width: 24px; background: #0078d7; }
.tray { margin-left: auto; display: flex; align-items: center; padding-right: 30px; }
.cloud { margin-left: 26px; }
.lang { width: 44px; margin: 0 23px 0 22px; padding-bottom: 1px; display: flex; flex-direction: column; align-items: center; }
.spk { margin-left: 12px; } .bat { margin-left: 12px; }
.clock { width: 116px; padding-bottom: 2px; display: flex; flex-direction: column; align-items: flex-end; }
.date { letter-spacing: .4px; }
.badge { width: 24px; height: 24px; margin-left: 12px; border-radius: 50%; background: #0078d7; color: #fff; font-size: 15px; text-align: center; }
```
